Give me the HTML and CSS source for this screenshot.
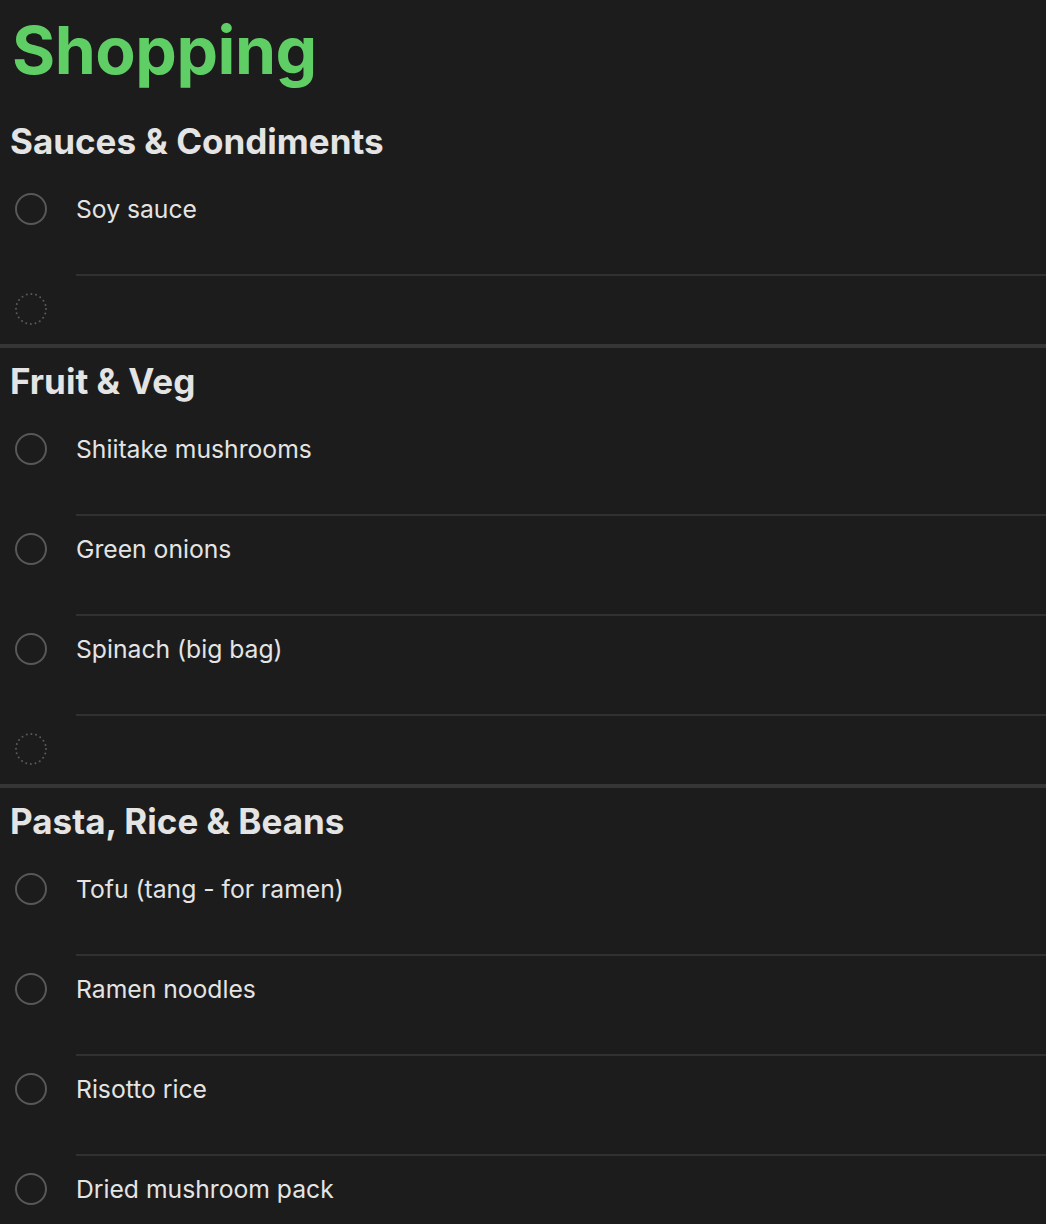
FILE: index.html
```html
<!DOCTYPE html>
<html>
<head>
<meta charset="utf-8">
<link rel="stylesheet" href="styles.css">
</head>
<body>
<main class="list">
  <h1 class="title">Shopping</h1>

  <section class="group">
    <h2 class="group-title">Sauces &amp; Condiments</h2>
    <ul class="items">
      <li class="item"><span class="check"></span><div class="body">Soy sauce</div></li>
      <li class="item item-new"><svg class="check-new" viewBox="0 0 32 32"><circle cx="16" cy="16" r="15" /></svg><div class="body"></div></li>
    </ul>
  </section>

  <section class="group">
    <h2 class="group-title">Fruit &amp; Veg</h2>
    <ul class="items">
      <li class="item"><span class="check"></span><div class="body">Shiitake mushrooms</div></li>
      <li class="item"><span class="check"></span><div class="body">Green onions</div></li>
      <li class="item"><span class="check"></span><div class="body">Spinach (big bag)</div></li>
      <li class="item item-new"><svg class="check-new" viewBox="0 0 32 32"><circle cx="16" cy="16" r="15" /></svg><div class="body"></div></li>
    </ul>
  </section>

  <section class="group">
    <h2 class="group-title">Pasta, Rice &amp; Beans</h2>
    <ul class="items">
      <li class="item"><span class="check"></span><div class="body">Tofu (tang - for ramen)</div></li>
      <li class="item"><span class="check"></span><div class="body">Ramen noodles</div></li>
      <li class="item"><span class="check"></span><div class="body">Risotto rice</div></li>
      <li class="item"><span class="check"></span><div class="body">Dried mushroom pack</div></li>
    </ul>
  </section>
</main>
</body>
</html>
```

FILE: styles.css
```css
html, body {
  margin: 0;
  padding: 0;
  background: #1c1c1c;
}

body {
  font-family: Inter, "Noto Sans", sans-serif;
  color: #e2e2e2;
  height: 1224px;
  overflow: hidden;
}

.title {
  margin: 0;
  height: 109px;
  box-sizing: border-box;
  padding: 12px 0 0 12px;
  font-size: 66px;
  font-weight: 700;
  line-height: 76px;
  color: #5fcf65;
  letter-spacing: -0.5px;
}

.group + .group {
  border-top: 4px solid #363636;
}

.group-title {
  margin: 0;
  height: 67px;
  box-sizing: border-box;
  padding: 12px 0 0 10px;
  font-size: 35px;
  line-height: 40px;
  font-weight: 700;
  color: #e4e4e4;
  letter-spacing: 0;
}

.group + .group .group-title {
  height: 68px;
  padding-top: 13px;
}

.items {
  list-style: none;
  margin: 0;
  padding: 0;
}

.item {
  display: flex;
  align-items: flex-start;
  padding-left: 15px;
}

.check {
  flex: none;
  width: 32px;
  height: 32px;
  margin-top: 17px;
  box-sizing: border-box;
  border: 2px solid #585858;
  border-radius: 50%;
}

.check-new {
  flex: none;
  width: 32px;
  height: 32px;
  margin-top: 17px;
}

.check-new circle {
  fill: none;
  stroke: #5a5a5a;
  stroke-width: 2;
  stroke-linecap: round;
  stroke-dasharray: 0 4.71;
}

.body {
  flex: 1;
  margin-left: 29px;
  height: 100px;
  box-sizing: border-box;
  border-bottom: 2px solid #313131;
  padding-top: 18px;
  font-size: 24.7px;
  line-height: 30px;
  color: #e4e4e4;
}

.item-new .body {
  height: 68px;
  border-bottom: none;
}

.items .item:last-child .body {
  border-bottom: none;
}
```
